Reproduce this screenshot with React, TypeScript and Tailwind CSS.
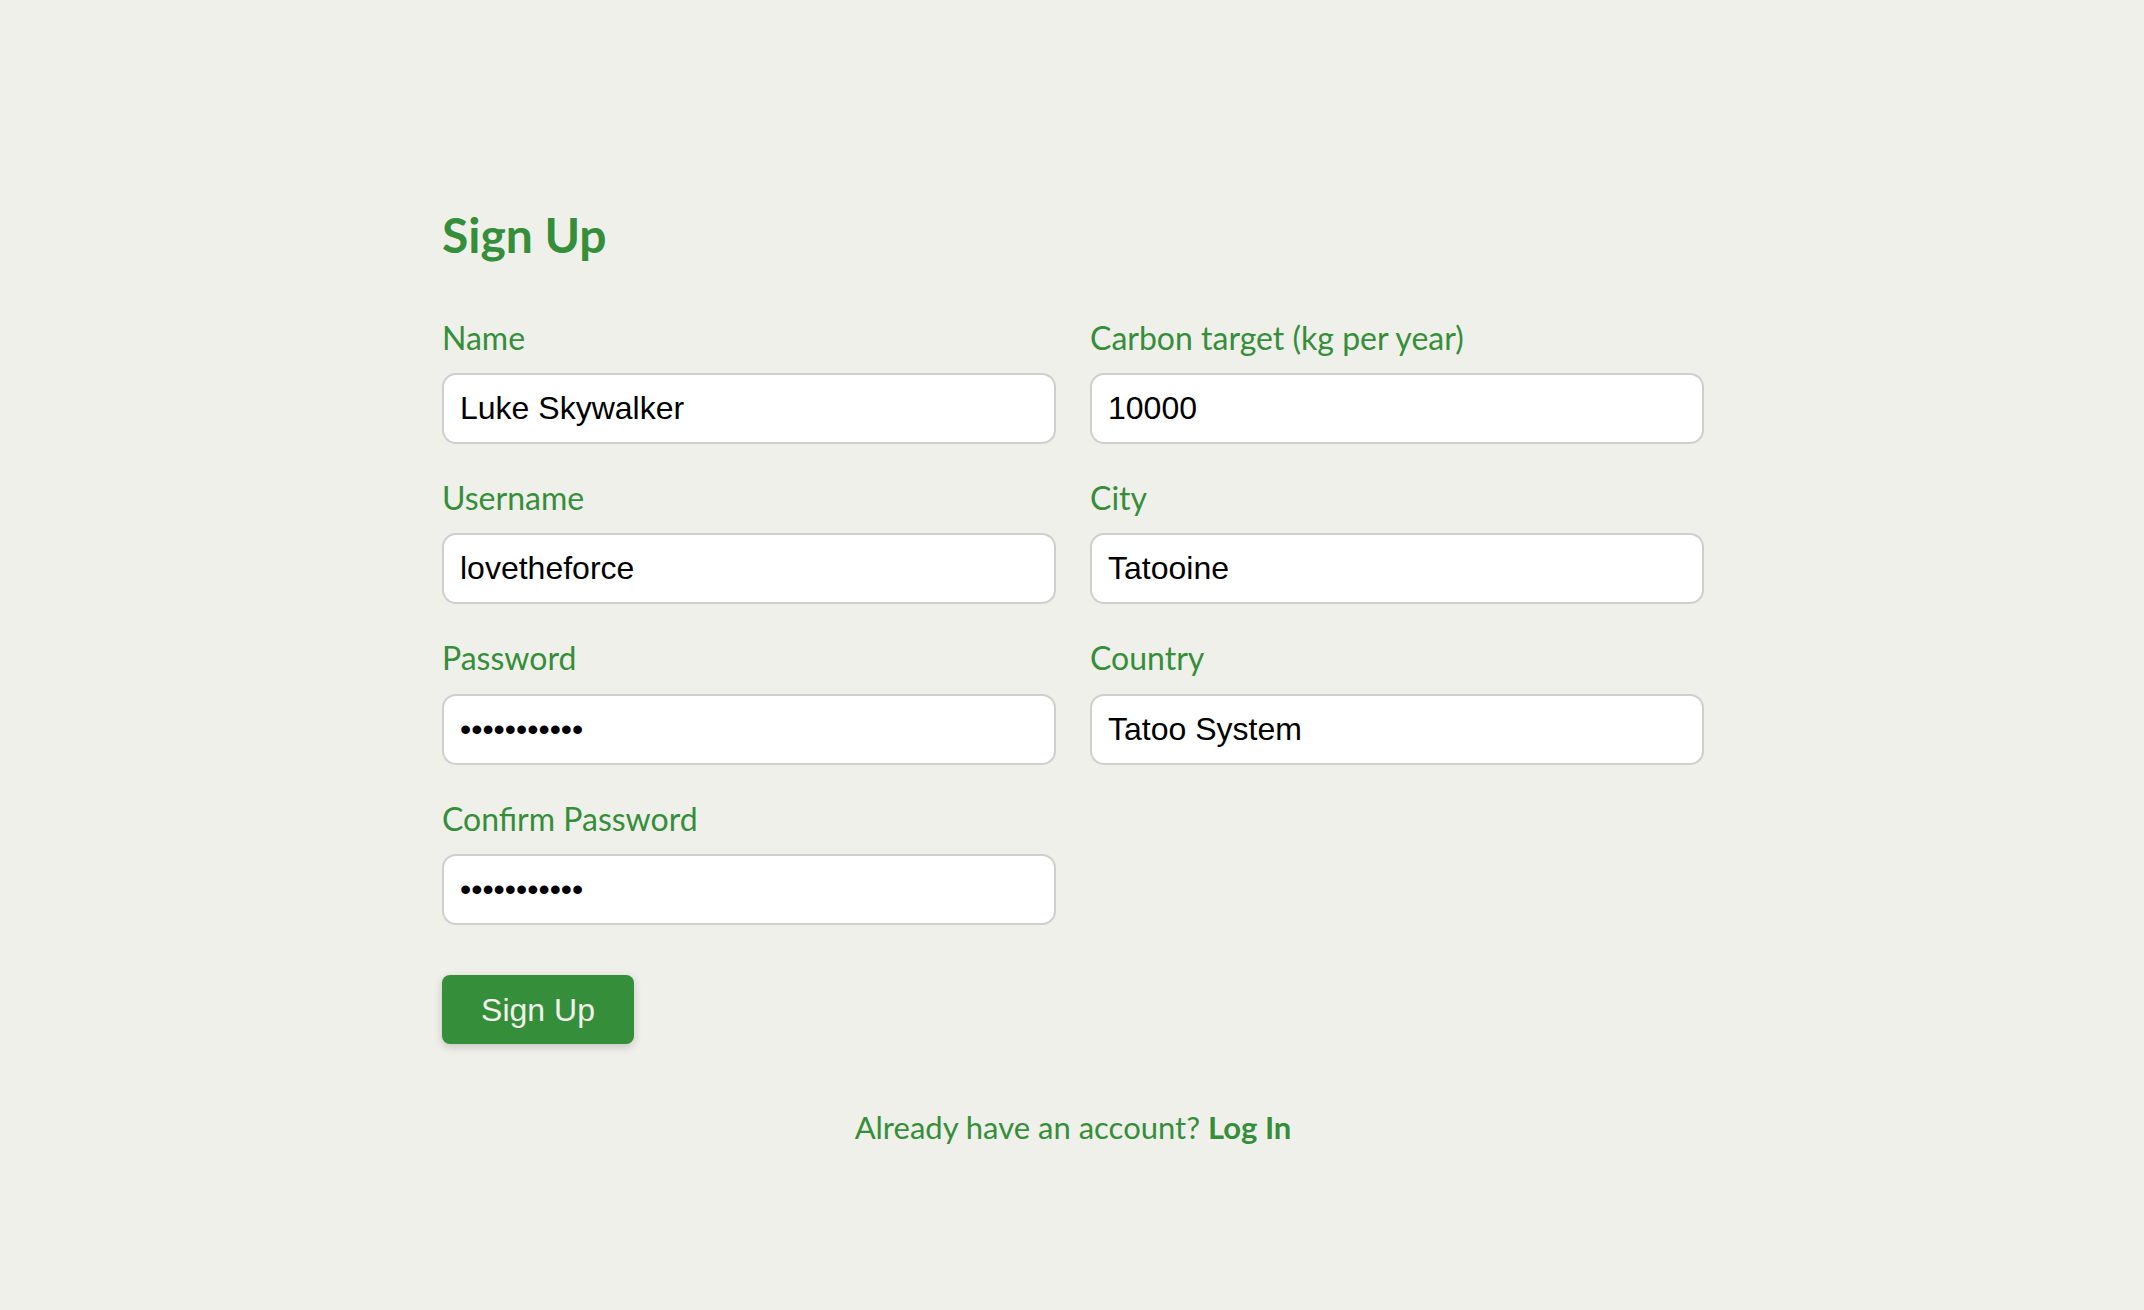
import React, { useState } from 'react';

const fields = [
  { id: 'name', label: 'Name', type: 'text', value: 'Luke Skywalker' },
  { id: 'target', label: 'Carbon target (kg per year)', type: 'text', value: '10000' },
  { id: 'username', label: 'Username', type: 'text', value: 'lovetheforce' },
  { id: 'city', label: 'City', type: 'text', value: 'Tatooine' },
  { id: 'password', label: 'Password', type: 'password', value: 'maytheforce' },
  { id: 'country', label: 'Country', type: 'text', value: 'Tatoo System' },
  { id: 'confirm', label: 'Confirm Password', type: 'password', value: 'maytheforce' },
];

export default function App() {
  const [form, setForm] = useState<Record<string, string>>(
    Object.fromEntries(fields.map((f) => [f.id, f.value]))
  );

  return (
    <div className="min-h-screen bg-[#f0f0eb] font-['Lato','Noto_Sans',sans-serif]">
      <div className="w-[1266px] mx-auto pl-[3px] pr-[1px] pt-[206px] pb-20">
        <h1 className="text-[48px] leading-[1.2] font-bold text-[#358e39] mb-[55px]">Sign Up</h1>

        <form onSubmit={(e) => e.preventDefault()}>
          <div className="grid grid-cols-2 gap-x-[34px] gap-y-[35px]">
            {fields.map((f) => (
              <div key={f.id} className="flex flex-col">
                <label htmlFor={f.id} className="text-[32px] leading-[1.2] text-[#358e39] mb-[16px]">
                  {f.label}
                </label>
                <input
                  id={f.id}
                  type={f.type}
                  value={form[f.id]}
                  onChange={(e) => setForm({ ...form, [f.id]: e.target.value })}
                  className="h-[71px] px-4 bg-white border-2 border-[#cfcfcf] rounded-[14px] outline-none text-[32px] text-black font-['Liberation_Sans','Arial',sans-serif]"
                />
              </div>
            ))}
          </div>

          <button className="mt-[50px] w-[192px] h-[69px] rounded-[8px] bg-[#358e39] text-[#f2f2ec] text-[32px] font-['Liberation_Sans','Arial',sans-serif] shadow-[0_3px_8px_rgba(0,0,0,0.18)]">
            Sign Up
          </button>
        </form>

        <p className="mt-[65px] text-center text-[31px] leading-[1.2] text-[#358e39]">
          Already have an account? <a href="#" className="font-bold">Log In</a>
        </p>
      </div>
    </div>
  );
}
